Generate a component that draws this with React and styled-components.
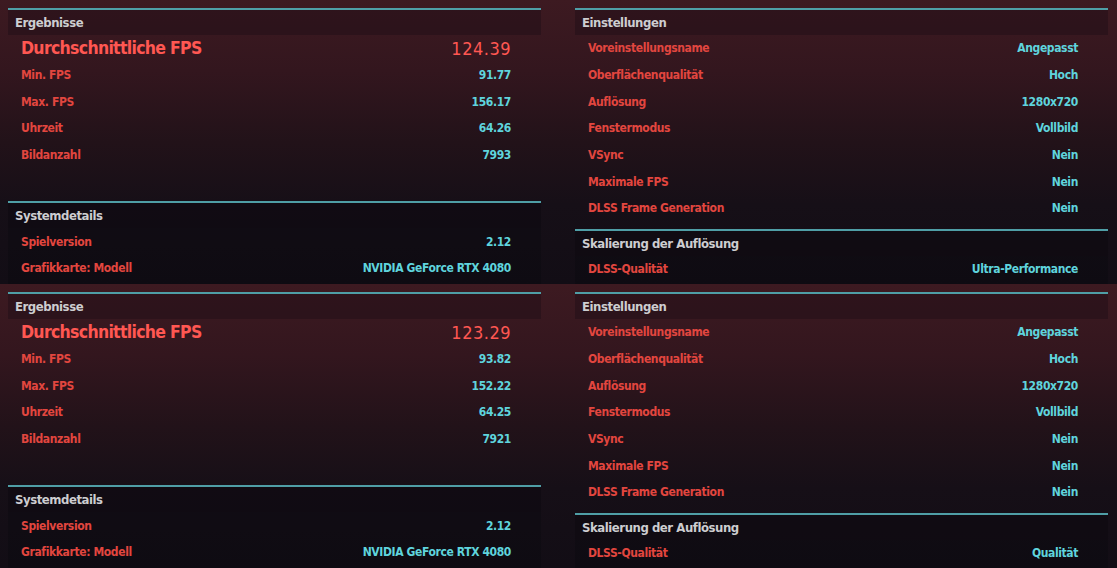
import styled, { createGlobalStyle } from 'styled-components';

const GlobalStyle = createGlobalStyle`
  html, body {
    margin: 0;
    padding: 0;
    background: #100c14;
  }
  body {
    font-family: "DejaVu Sans Condensed", "Liberation Sans Narrow", "Liberation Sans", sans-serif;
  }
`;

const Screen = styled.div`
  height: 284px;
  box-sizing: border-box;
  padding: 8px 9px 0 8px;
  display: grid;
  grid-template-columns: 533px 533px;
  column-gap: 34px;
  background: linear-gradient(180deg, #3d1a21 0%, #33161e 25%, #221219 50%, #160f17 72%, #120d15 100%);
  overflow: hidden;
`;

const Column = styled.div`
  display: flex;
  flex-direction: column;
`;

const Panel = styled.section`
  border-top: 2px solid #4f9ea6;
  margin-top: ${(p) => p.$offset || 0}px;
  background: ${(p) => (p.$dark ? 'rgba(10, 8, 14, 0.35)' : 'transparent')};
  flex: ${(p) => (p.$fill ? 1 : 'none')};
`;

const Header = styled.div`
  height: 25px;
  display: flex;
  align-items: center;
  padding-left: 7px;
  background: rgba(18, 10, 20, 0.32);
  color: #cdcdd0;
  font-size: 13px;
  font-weight: 700;
  letter-spacing: -0.45px;
`;

const Row = styled.div`
  height: 26.67px;
  display: flex;
  align-items: center;
  justify-content: space-between;
  padding: 0 30px 0 13px;
  font-size: ${(p) => (p.$big ? 17.5 : 12)}px;
  font-weight: 700;
  letter-spacing: ${(p) => (p.$big ? -0.7 : -0.38)}px;
`;

const Label = styled.span`
  color: ${(p) => (p.$big ? '#ff5752' : '#e2463f')};
`;

const Value = styled.span`
  color: ${(p) => (p.$big ? '#ff5752' : '#5fd4dd')};
  font-size: ${(p) => (p.$big ? '18px' : 'inherit')};
  letter-spacing: ${(p) => (p.$big ? '0.5px' : 'inherit')};
  font-weight: ${(p) => (p.$big ? 400 : 700)};
`;

const results = [
  {
    avg: '124.39',
    rows: [['Min. FPS', '91.77'], ['Max. FPS', '156.17'], ['Uhrzeit', '64.26'], ['Bildanzahl', '7993']],
    quality: 'Ultra-Performance',
  },
  {
    avg: '123.29',
    rows: [['Min. FPS', '93.82'], ['Max. FPS', '152.22'], ['Uhrzeit', '64.25'], ['Bildanzahl', '7921']],
    quality: 'Qualität',
  },
];

const settings = [
  ['Voreinstellungsname', 'Angepasst'],
  ['Oberflächenqualität', 'Hoch'],
  ['Auflösung', '1280x720'],
  ['Fenstermodus', 'Vollbild'],
  ['VSync', 'Nein'],
  ['Maximale FPS', 'Nein'],
  ['DLSS Frame Generation', 'Nein'],
];

const Benchmark = ({ data }) => (
  <Screen>
    <Column>
      <Panel>
        <Header>Ergebnisse</Header>
        <Row $big>
          <Label $big>Durchschnittliche FPS</Label>
          <Value $big>{data.avg}</Value>
        </Row>
        {data.rows.map(([k, v]) => (
          <Row key={k}>
            <Label>{k}</Label>
            <Value>{v}</Value>
          </Row>
        ))}
      </Panel>
      <Panel $offset={33} $dark $fill>
        <Header>Systemdetails</Header>
        <Row>
          <Label>Spielversion</Label>
          <Value>2.12</Value>
        </Row>
        <Row>
          <Label>Grafikkarte: Modell</Label>
          <Value>NVIDIA GeForce RTX 4080</Value>
        </Row>
      </Panel>
    </Column>
    <Column>
      <Panel>
        <Header>Einstellungen</Header>
        {settings.map(([k, v]) => (
          <Row key={k}>
            <Label>{k}</Label>
            <Value>{v}</Value>
          </Row>
        ))}
      </Panel>
      <Panel $offset={7} $dark $fill>
        <Header>Skalierung der Auflösung</Header>
        <Row>
          <Label>DLSS-Qualität</Label>
          <Value>{data.quality}</Value>
        </Row>
      </Panel>
    </Column>
  </Screen>
);

export default function App() {
  return (
    <>
      <GlobalStyle />
      {results.map((r, i) => (
        <Benchmark key={i} data={r} />
      ))}
    </>
  );
}
